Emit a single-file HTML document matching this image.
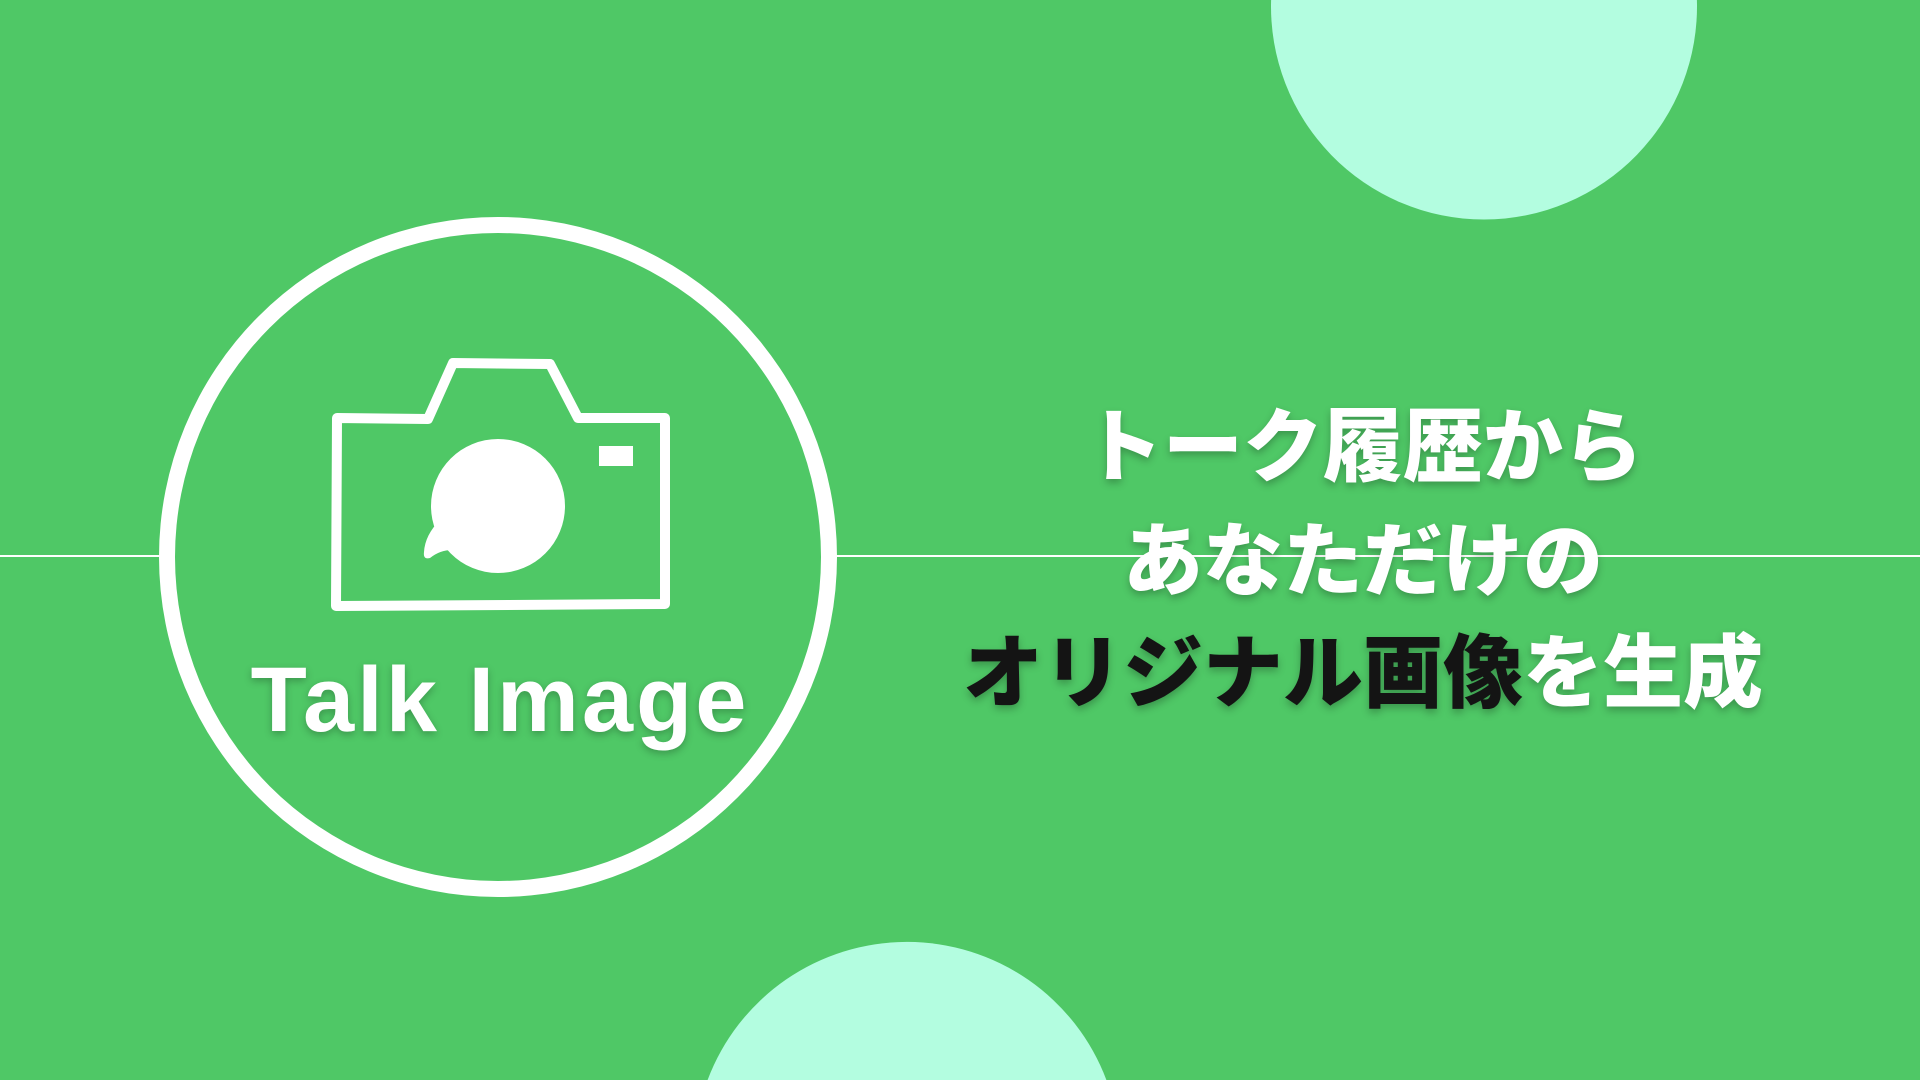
<!DOCTYPE html>
<html><head><meta charset="utf-8"><style>
html,body{margin:0;padding:0;width:1920px;height:1080px;overflow:hidden}
#w{width:1920px;height:1080px;overflow:hidden;background:#4fc866;position:relative;font-family:"Liberation Sans","Noto Sans CJK JP",sans-serif}
.big{position:absolute;left:159px;top:217px;width:646px;height:648px;border:16px solid #fff;border-radius:50%;background:#4fc866}
.title{position:absolute;left:230px;top:645px;width:540px;text-align:center;color:#fff;font-weight:bold;font-size:92px;letter-spacing:3px;line-height:110px;text-shadow:0 3px 8px rgba(0,0,0,.25)}
.jp{position:absolute;left:880px;width:966px;text-align:center;font-family:"Noto Sans CJK JP",sans-serif;font-weight:900;font-size:80px;line-height:100px;color:#fff;text-shadow:0 4px 8px rgba(0,0,0,.25);white-space:nowrap}
.k{color:#141414}
svg{display:block}
</style></head><body><div id="w">
<svg style="position:absolute;left:0;top:0" width="1920" height="1080">
<rect x="0" y="555" width="1920" height="2" fill="#fff"/>
<path d="M1271.1 0 A213 213 0 1 0 1696.9 0 Z" fill="#b3fde0"/>
<path d="M707.6 1080 A213 213 0 0 1 1106.4 1080 Z" fill="#b3fde0"/>
</svg>
<div class="big"></div>
<svg style="position:absolute;left:0;top:0" width="1920" height="1080">
<path d="M337 418 L428 419 L453 363 L550 364 L578 418 L665 418 L665 604 L336 606 Z" fill="none" stroke="#fff" stroke-width="10" stroke-linejoin="round"/>
<circle cx="498" cy="506" r="67" fill="#fff"/>
<path d="M440 520 Q425 535 424 552 Q423 560 430 558 Q440 550 452 550 L460 548 Z" fill="#fff"/>
<rect x="599" y="446" width="34" height="20" fill="#fff"/>
</svg>
<div class="title">Talk Image</div>
<div class="jp" style="top:391px">トーク履歴から</div>
<div class="jp" style="top:505px">あなただけの</div>
<div class="jp" style="top:617px"><span class="k">オリジナル画像</span>を生成</div>
</div></body></html>
